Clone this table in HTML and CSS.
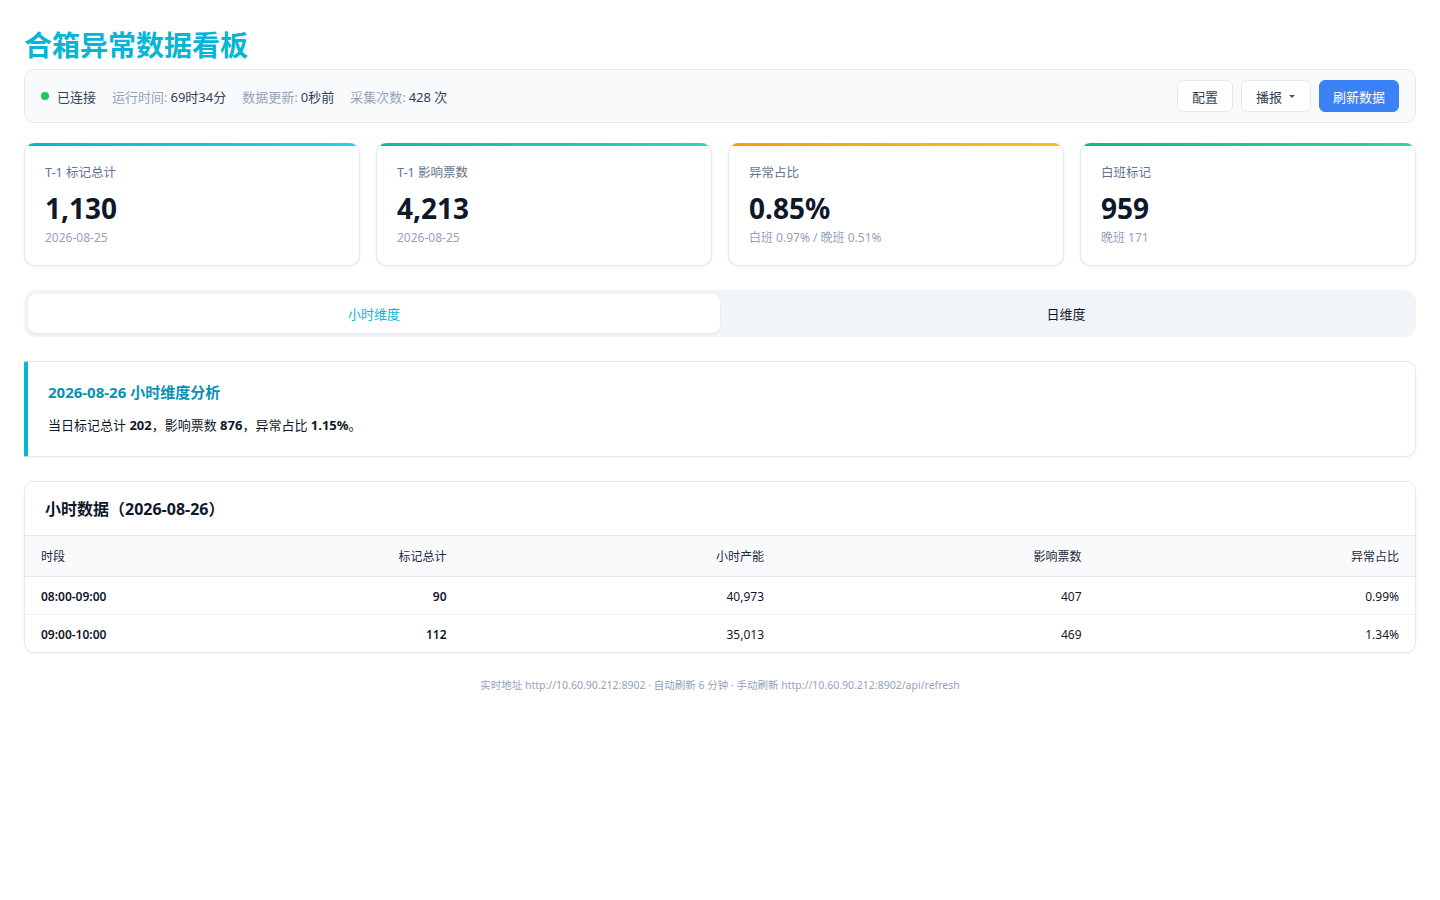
FILE: index.html
```html
<!DOCTYPE html>
<html lang="zh-CN">
<head>
<meta charset="utf-8">
<title>合箱异常数据看板</title>
<link rel="stylesheet" href="styles.css">
</head>
<body>
<div class="page">
  <h1 class="title">合箱异常数据看板</h1>

  <div class="statusbar">
    <div class="status-left">
      <span class="status-item"><span class="dot"></span><span class="val">已连接</span></span>
      <span class="status-item"><span class="lbl">运行时间:</span> <span class="val">69时34分</span></span>
      <span class="status-item"><span class="lbl">数据更新:</span> <span class="val">0秒前</span></span>
      <span class="status-item"><span class="lbl">采集次数:</span> <span class="val">428 次</span></span>
    </div>
    <div class="status-right">
      <button class="btn">配置</button>
      <button class="btn btn-drop">播报 <span class="caret"></span></button>
      <button class="btn btn-primary">刷新数据</button>
    </div>
  </div>

  <div class="cards">
    <div class="card c-cyan">
      <div class="card-body">
        <div class="card-label">T-1 标记总计</div>
        <div class="card-value">1,130</div>
        <div class="card-sub">2026-08-25</div>
      </div>
    </div>
    <div class="card c-teal">
      <div class="card-body">
        <div class="card-label">T-1 影响票数</div>
        <div class="card-value">4,213</div>
        <div class="card-sub">2026-08-25</div>
      </div>
    </div>
    <div class="card c-amber">
      <div class="card-body">
        <div class="card-label">异常占比</div>
        <div class="card-value">0.85%</div>
        <div class="card-sub">白班 0.97% / 晚班 0.51%</div>
      </div>
    </div>
    <div class="card c-green">
      <div class="card-body">
        <div class="card-label">白班标记</div>
        <div class="card-value">959</div>
        <div class="card-sub">晚班 171</div>
      </div>
    </div>
  </div>

  <div class="tabs">
    <div class="tab active">小时维度</div>
    <div class="tab">日维度</div>
  </div>

  <div class="analysis">
    <div class="analysis-title">2026-08-26 小时维度分析</div>
    <div class="analysis-text">当日标记总计 <b>202</b>，影响票数 <b>876</b>，异常占比 <b>1.15%</b>。</div>
  </div>

  <div class="table-card">
    <div class="table-head">小时数据（2026-08-26）</div>
    <table class="data">
      <colgroup>
        <col class="col-first">
        <col class="col-rest">
        <col class="col-rest">
        <col class="col-rest">
        <col class="col-rest">
      </colgroup>
      <thead>
        <tr>
          <th class="left">时段</th>
          <th>标记总计</th>
          <th>小时产能</th>
          <th>影响票数</th>
          <th>异常占比</th>
        </tr>
      </thead>
      <tbody>
        <tr>
          <td class="left strong">08:00-09:00</td>
          <td class="strong">90</td>
          <td>40,973</td>
          <td>407</td>
          <td>0.99%</td>
        </tr>
        <tr>
          <td class="left strong">09:00-10:00</td>
          <td class="strong">112</td>
          <td>35,013</td>
          <td>469</td>
          <td>1.34%</td>
        </tr>
      </tbody>
    </table>
  </div>

  <div class="footer">实时地址 http://10.60.90.212:8902 · 自动刷新 6 分钟 · 手动刷新 http://10.60.90.212:8902/api/refresh</div>
</div>
</body>
</html>
```

FILE: styles.css
```css
* { box-sizing: border-box; }
html, body { margin: 0; padding: 0; background: #ffffff; }
body {
  font-family: "Noto Sans", "Noto Sans CJK SC", sans-serif;
  color: #0f172a;
}
.page { padding: 24px 24px 40px; }

.title {
  margin: 0 0 5px;
  font-size: 28px;
  line-height: 40px;
  font-weight: 700;
  color: #06b6d4;
  font-family: "Noto Sans CJK SC", sans-serif;
}

.statusbar {
  display: flex;
  align-items: center;
  justify-content: space-between;
  padding: 10px 16px;
  background: #f8fafc;
  border: 1px solid #e2e8f0;
  border-radius: 10px;
  font-size: 13px;
}
.status-left { display: flex; align-items: center; gap: 16px; }
.status-item { display: flex; align-items: center; gap: 3px; }
.dot {
  width: 8px; height: 8px; border-radius: 50%;
  background: #22c55e; margin-right: 5px;
}
.lbl { color: #94a3b8; }
.val { color: #334155; }
.status-right { display: flex; gap: 8px; }
.btn {
  height: 32px;
  padding: 0 14px;
  font-family: "Noto Sans CJK SC", sans-serif;
  font-size: 13px;
  color: #334155;
  background: #ffffff;
  border: 1px solid #e2e8f0;
  border-radius: 6px;
  display: flex; align-items: center; gap: 6px;
}
.btn-drop { padding: 0 15px 0 14px; gap: 7px; }
.caret {
  width: 0; height: 0;
  border-left: 3px solid transparent;
  border-right: 3px solid transparent;
  border-top: 3px solid #475569;
}
.btn-primary {
  background: #3b82f6;
  border-color: #3b82f6;
  color: #ffffff;
  padding: 0 13px;
}

.cards {
  margin-top: 20px;
  display: grid;
  grid-template-columns: repeat(4, 1fr);
  gap: 16px;
}
.card {
  background: #ffffff;
  border: 1px solid #e2e8f0;
  border-top: none;
  border-radius: 10px;
  overflow: hidden;
  box-shadow: 0 1px 3px rgba(15, 23, 42, 0.06);
}
.card::before {
  content: "";
  display: block;
  height: 3px;
}
.c-cyan::before { background: linear-gradient(90deg, #06b6d4, #22d3ee); }
.c-teal::before { background: linear-gradient(90deg, #14b8a6, #2dd4bf); }
.c-amber::before { background: linear-gradient(90deg, #f59e0b, #fbbf24); }
.c-green::before { background: linear-gradient(90deg, #10b981, #34d399); }
.card-body { padding: 17px 20px 18px; }
.card-label {
  font-size: 12.5px; line-height: 20px; color: #64748b;
  margin-bottom: 7px;
}
.card-value {
  font-size: 28px; line-height: 36px; font-weight: 700; color: #0f172a;
}
.card-sub {
  margin-top: 3px;
  font-size: 12px; line-height: 18px; color: #94a3b8;
}

.tabs {
  margin-top: 24px;
  display: flex;
  padding: 4px;
  background: #f1f5f9;
  border-radius: 12px;
}
.tab {
  flex: 1;
  height: 39px;
  display: flex; align-items: center; justify-content: center;
  font-size: 13px;
  color: #0f172a;
  border-radius: 8px;
}
.tab.active {
  background: #ffffff;
  color: #06b6d4;
  box-shadow: 0 1px 3px rgba(15, 23, 42, 0.08);
}

.analysis {
  margin-top: 24px;
  border: 1px solid #e2e8f0;
  border-left: 4px solid #06b6d4;
  border-radius: 2px 10px 10px 2px;
  padding: 18px 20px 20px;
  box-shadow: 0 1px 3px rgba(15, 23, 42, 0.05);
}
.analysis-title {
  font-size: 15px; line-height: 24px; font-weight: 700; color: #0891b2;
  margin-bottom: 10px;
}
.analysis-text {
  font-size: 13px; line-height: 22px; color: #0f172a;
}
.analysis-text b { font-weight: 700; }

.table-card {
  margin-top: 24px;
  border: 1px solid #e2e8f0;
  border-radius: 10px;
  overflow: hidden;
  box-shadow: 0 1px 3px rgba(15, 23, 42, 0.05);
}
.table-head {
  padding: 16px 20px 15px;
  font-size: 16px; line-height: 22px; font-weight: 700;
  border-bottom: 1px solid #e2e8f0;
}
.data {
  width: 100%;
  border-collapse: collapse;
  table-layout: fixed;
  font-size: 12px;
}
.col-first { width: 120px; }
.data th {
  background: #f8fafc;
  font-weight: 400;
  color: #1e293b;
  text-align: right;
  padding: 13px 16px 11px;
  line-height: 16px;
  border-bottom: 1px solid #e2e8f0;
}
.data td {
  text-align: right;
  padding: 11px 16px 9px;
  line-height: 17px;
  color: #0f172a;
  border-bottom: 1px solid #f1f5f9;
}
.data tbody tr:last-child td { border-bottom: none; }
.data .left { text-align: left; }
.data .strong { font-weight: 600; }

.footer {
  margin-top: 24px;
  text-align: center;
  font-size: 10.5px;
  line-height: 16px;
  color: #94a3b8;
}
```
